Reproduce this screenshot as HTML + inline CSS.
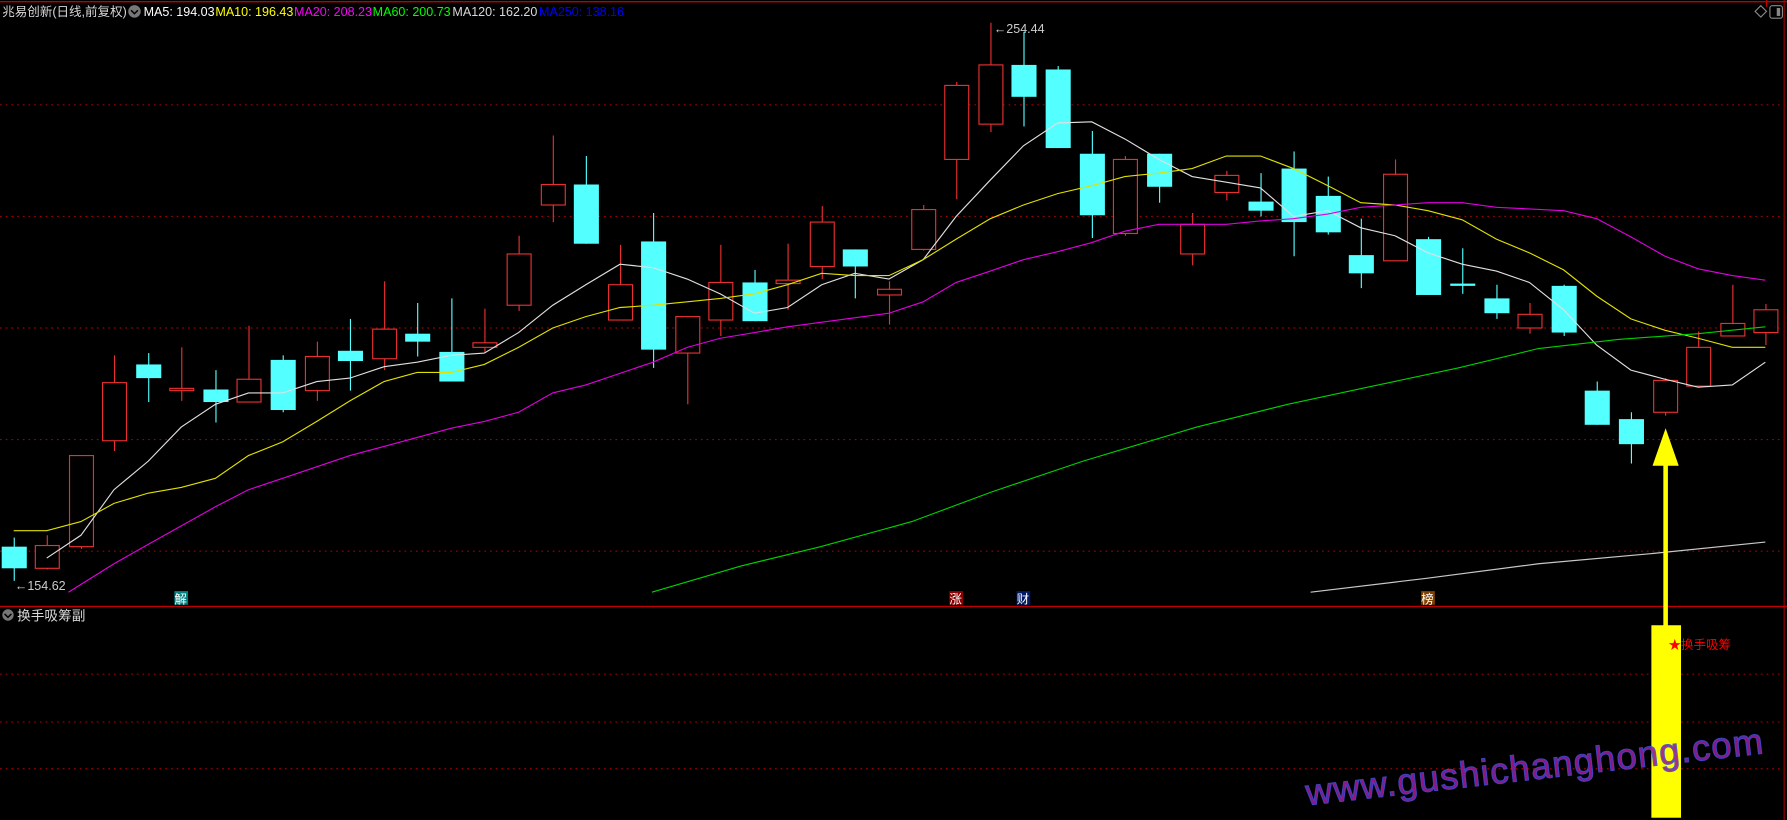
<!DOCTYPE html>
<html><head><meta charset="utf-8"><style>
html,body{margin:0;padding:0;background:#000;overflow:hidden}
svg{display:block}
text{font-family:"Liberation Sans","Noto Sans CJK SC",sans-serif}
</style></head><body>
<svg id="s" width="1787" height="820" viewBox="0 0 1568 720" preserveAspectRatio="none" xmlns="http://www.w3.org/2000/svg">
<rect width="1568" height="720" fill="#000"/>
<line x1="0" y1="1.5" x2="1568" y2="1.5" stroke="#c00000" stroke-width="1.2"/>
<line x1="1550" y1="0" x2="1550" y2="6" stroke="#c00000"/>
<line x1="1565.5" y1="0" x2="1565.5" y2="720" stroke="#a00000"/>
<g stroke="#a00000" stroke-dasharray="1.5,3.5" stroke-width="1">
<line x1="0" y1="92" x2="1565" y2="92"/><line x1="0" y1="190" x2="1565" y2="190"/><line x1="0" y1="288" x2="1565" y2="288"/><line x1="0" y1="386" x2="1565" y2="386"/><line x1="0" y1="484" x2="1565" y2="484"/>
<line x1="0" y1="592" x2="1565" y2="592"/><line x1="0" y1="634" x2="1565" y2="634"/><line x1="0" y1="675" x2="1565" y2="675"/>
</g>
<line x1="0" y1="532.5" x2="1568" y2="532.5" stroke="#c00000" stroke-width="1.2"/>
<g id="c"></g>
<g fill="none" stroke-width="1">
<polyline stroke="#e0e0e0" points="41,490 71,470 100,430 130,405 159,375 189,355 218,345 248,345 278,335 307,332 337,322 366,318 396,312 425,310 455,292 485,268 514,250 544,232 573,235 603,245 632,258 662,275 691,270 721,250 750,240 780,245 810,228 839,190 869,158 898,128 928,108 958,107 987,122 1017,140 1046,155 1076,160 1106,165 1135,190 1165,185 1194,200 1224,207 1253,222 1283,232 1313,238 1342,248 1372,272 1401,303 1431,325 1461,333 1490,340 1520,338 1549,318"/>
<polyline stroke="#e0e000" points="12,466 41,466 71,458 100,442 130,433 159,428 189,420 218,400 248,388 278,370 307,352 337,335 366,327 396,327 425,320 455,305 485,288 514,278 544,270 573,268 603,265 632,262 662,258 691,250 721,240 750,242 780,242 810,228 839,210 869,192 898,180 928,170 958,163 987,155 1017,152 1046,148 1076,137 1106,137 1135,148 1165,163 1194,178 1224,180 1253,185 1283,193 1313,210 1342,222 1372,237 1401,260 1431,280 1461,290 1490,297 1520,305 1549,305"/>
<polyline stroke="#e000e0" points="60,520 100,495 130,478 189,445 218,430 248,420 307,400 337,392 396,376 425,370 455,362 485,345 514,338 573,318 603,305 632,297 662,292 691,287 780,275 810,265 839,248 869,238 898,228 928,221 958,213 987,203 1017,197 1046,197 1076,197 1106,194 1135,192 1165,188 1194,182 1224,180 1253,178 1283,178 1313,182 1372,185 1401,192 1431,208 1461,225 1490,236 1520,242 1549,246"/>
<polyline stroke="#00d000" points="572,520 650,497 720,480 800,458 870,432 950,405 1050,375 1130,355 1200,340 1280,323 1350,306 1420,298 1490,293 1549,287"/>
<polyline stroke="#c8c8c8" points="1150,520 1250,508 1350,495 1450,486 1549,476"/>
</g>
<text x="2" y="14" font-size="11" fill="#d8d8d8">兆易创新(日线,前复权)</text>
<circle cx="118" cy="10" r="5.5" fill="#777"/><path d="M115,9 l3,3 l3,-3" stroke="#000" fill="none" stroke-width="1.3"/>
<text x="126" y="14" font-size="11" fill="#fff">MA5: 194.03</text>
<text x="189" y="14" font-size="11" fill="#ffff00">MA10: 196.43</text>
<text x="258" y="14" font-size="11" fill="#ff00ff">MA20: 208.23</text>
<text x="327" y="14" font-size="11" fill="#00ff00">MA60: 200.73</text>
<text x="397" y="14" font-size="11" fill="#d8d8d8">MA120: 162.20</text>
<text x="473" y="14" font-size="11" fill="#0000ff">MA250: 138.16</text>
<path d="M1545,5 l5,5 l-5,5 l-5,-5z" fill="none" stroke="#888"/>
<rect x="1553" y="5" width="11" height="11" rx="2" fill="none" stroke="#888"/><rect x="1559" y="7" width="3" height="7" fill="#888"/>
<text x="13" y="518" font-size="11" fill="#ccc">←154.62</text>
<text x="872" y="29" font-size="11" fill="#ccc">←254.44</text>
<rect x="153" y="519" width="12" height="12" fill="#008080"/><text x="153" y="530" font-size="11" fill="#fff">解</text>
<rect x="833" y="519" width="12" height="12" fill="#8b0000"/><text x="833" y="530" font-size="11" fill="#fff">涨</text>
<rect x="892" y="519" width="12" height="12" fill="#001a66"/><text x="892" y="530" font-size="11" fill="#fff">财</text>
<rect x="1247" y="519" width="12" height="12" fill="#804000"/><text x="1247" y="530" font-size="11" fill="#fff">榜</text>
<circle cx="7" cy="540" r="5" fill="#777"/><path d="M4,539 l3,3 l3,-3" stroke="#000" fill="none" stroke-width="1.3"/>
<text x="15" y="545" font-size="12" fill="#d8d8d8">换手吸筹副</text>
<rect x="1449" y="549" width="26" height="169" fill="#ffff00"/>
<line x1="1461.5" y1="553" x2="1461.5" y2="400" stroke="#ffff00" stroke-width="4" stroke-linecap="round"/>
<path d="M1461.5,376 L1473,409 L1450,409 Z" fill="#ffff00"/>
<text x="1464" y="570" font-size="11" fill="#ff0000">★换手吸筹</text>
<text x="1147" y="707" font-size="32" fill="#a01890" stroke="#4848d0" stroke-width="1" letter-spacing="1.5" transform="rotate(-6.5 1147 707)" font-family="DejaVu Sans,sans-serif" opacity="0.9" textLength="405">www.gushichanghong.com</text>
</svg>
<script>
var d=[[12,480,499,472,510,0],[41,479,499,470,500,1],[71,400,480,400,482,1],[100,336,387,312,396,1],[130,320,332,310,353,0],[159,341,343,305,352,1],[189,342,353,325,371,0],[218,333,353,286,353,1],[248,316,360,312,362,0],[278,313,343,300,352,1],[307,308,317,280,343,0],[337,289,315,247,325,1],[366,293,300,266,313,0],[396,309,335,262,335,0],[425,301,305,271,310,1],[455,223,268,207,273,1],[485,162,180,119,195,1],[514,162,214,137,214,0],[544,250,281,215,281,1],[573,212,307,187,323,0],[603,278,310,278,355,1],[632,248,281,215,295,1],[662,248,282,237,282,0],[691,246,249,214,272,1],[721,195,234,181,245,1],[750,219,234,219,262,0],[780,254,259,247,285,1],[810,184,219,180,220,1],[839,75,140,72,175,1],[869,57,109,20,116,1],[898,57,85,28,111,0],[928,61,130,58,130,0],[958,135,189,115,209,0],[987,140,205,137,207,1],[1017,135,164,135,178,0],[1046,197,223,187,233,1],[1076,154,169,150,176,1],[1106,177,185,152,190,0],[1135,148,195,133,225,0],[1165,172,204,155,206,0],[1194,224,240,192,253,0],[1224,153,229,140,229,1],[1253,210,259,208,259,0],[1283,249,251,218,258,0],[1313,262,275,250,280,0],[1342,276,288,266,293,1],[1372,251,292,250,295,0],[1401,343,373,335,373,0],[1431,368,390,362,407,0],[1461,334,362,332,365,1],[1490,305,339,291,339,1],[1520,284,295,250,295,1],[1549,272,292,267,303,1]];
var g=document.getElementById('c'),h='';
d.forEach(function(c){var col=c[5]?'#e83030':'#54ffff',x=c[0];
h+='<line x1="'+(x+.5)+'" y1="'+c[3]+'" x2="'+(x+.5)+'" y2="'+c[4]+'" stroke="'+col+'"/>';
if(c[5])h+='<rect x="'+(x-10)+'" y="'+c[1]+'" width="21" height="'+Math.max(c[2]-c[1],1)+'" fill="#000" stroke="'+col+'"/>';
else h+='<rect x="'+(x-10.5)+'" y="'+c[1]+'" width="22" height="'+Math.max(c[2]-c[1],1)+'" fill="'+col+'"/>';});
g.innerHTML=h;
</script>
</body></html>
